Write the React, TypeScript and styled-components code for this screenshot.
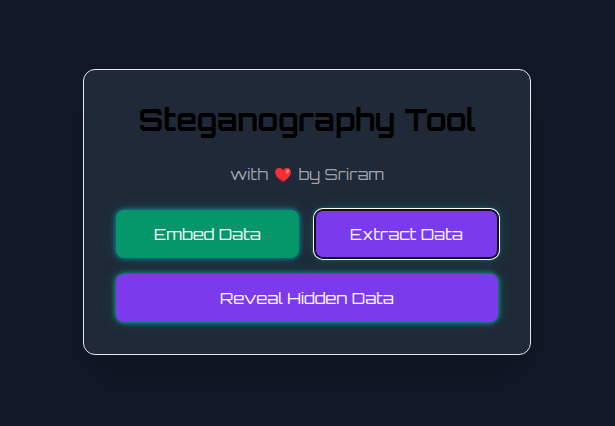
import React from "react";
import styled, { createGlobalStyle } from "styled-components";

const GlobalStyle = createGlobalStyle`
  *, *::before, *::after { box-sizing: border-box; }
  body { margin: 0; background: #111827; }
`;

const Page = styled.main`
  min-height: 100vh;
  display: flex;
  align-items: center;
  justify-content: center;
  padding-right: 1px;
  padding-bottom: 2px;
  overflow: hidden;
  background: #111827;
  font-family: Orbitron, "DejaVu Sans", sans-serif;
`;

const Card = styled.section`
  width: 448px;
  padding: 32px;
  border: 1px solid #e5e7eb;
  border-radius: 12px;
  background: #1f2937;
  box-shadow: 0 25px 50px -12px rgba(0, 0, 0, 0.25);
`;

const Title = styled.h1`
  margin: 0 0 24px;
  color: #000;
  font-size: 30px;
  font-weight: 700;
  line-height: 36px;
  text-align: center;
  white-space: nowrap;
`;

const Byline = styled.p`
  margin: 0 0 24px;
  color: #9ca3af;
  font-size: 16px;
  line-height: 24px;
  text-align: center;
`;

const HeartIcon = styled.svg`
  width: 22px;
  height: 16px;
  vertical-align: -3px;
`;

const Actions = styled.div`
  display: grid;
  grid-template-columns: 1fr 1fr;
  gap: 16px;
`;

const Button = styled.button<{ $fill: string; $glow: string; $wide?: boolean; $ring?: boolean }>`
  grid-column: ${(p) => (p.$wide ? "1 / -1" : "auto")};
  height: 48px;
  padding: 0;
  border: 0;
  border-radius: 8px;
  background: ${(p) => p.$fill};
  color: #fff;
  font-family: inherit;
  font-size: 16px;
  line-height: 24px;
  white-space: nowrap;
  box-shadow: ${(p) =>
    p.$ring
      ? "inset 0 0 0 1px #101010, 0 0 0 1px #101010, 0 0 0 2px #fff, "
      : ""}0 0 5px 1px ${(p) => p.$glow}, 0 0 20px rgba(20, 184, 166, 0.15);
`;

function Heart() {
  return (
    <HeartIcon viewBox="0 0 22 16" role="img" aria-label="love">
      <path
        d="M11 15.2C9.7 13.6 3.1 10.2 3.1 5.2 3.1 2.6 4.9 1 7.1 1c1.7 0 3 .8 3.9 2.3C11.9 1.8 13.2 1 14.9 1c2.2 0 4 1.6 4 4.2 0 5-6.6 8.4-7.9 10Z"
        fill="#f92f35"
      />
      <path d="M3.1 5c.4 4.5 4.8 6.8 8.6 8.3L11 15.2C9.7 13.6 2.9 10.2 3.1 5Z" fill="#ca123d" />
      <ellipse cx="15.5" cy="4.4" rx="1.5" ry="2.4" transform="rotate(28 15.5 4.4)" fill="#ff806e" />
    </HeartIcon>
  );
}

export default function App() {
  return (
    <>
      <GlobalStyle />
      <Page>
        <Card>
          <Title>Steganography Tool</Title>
          <Byline>
            with <Heart /> by Sriram
          </Byline>
          <Actions>
            <Button $fill="#059669" $glow="#0e8299">Embed Data</Button>
            <Button $fill="#7c3aed" $glow="#0e8299" $ring>Extract Data</Button>
            <Button $fill="#7c3aed" $glow="#0da195" $wide>Reveal Hidden Data</Button>
          </Actions>
        </Card>
      </Page>
    </>
  );
}
